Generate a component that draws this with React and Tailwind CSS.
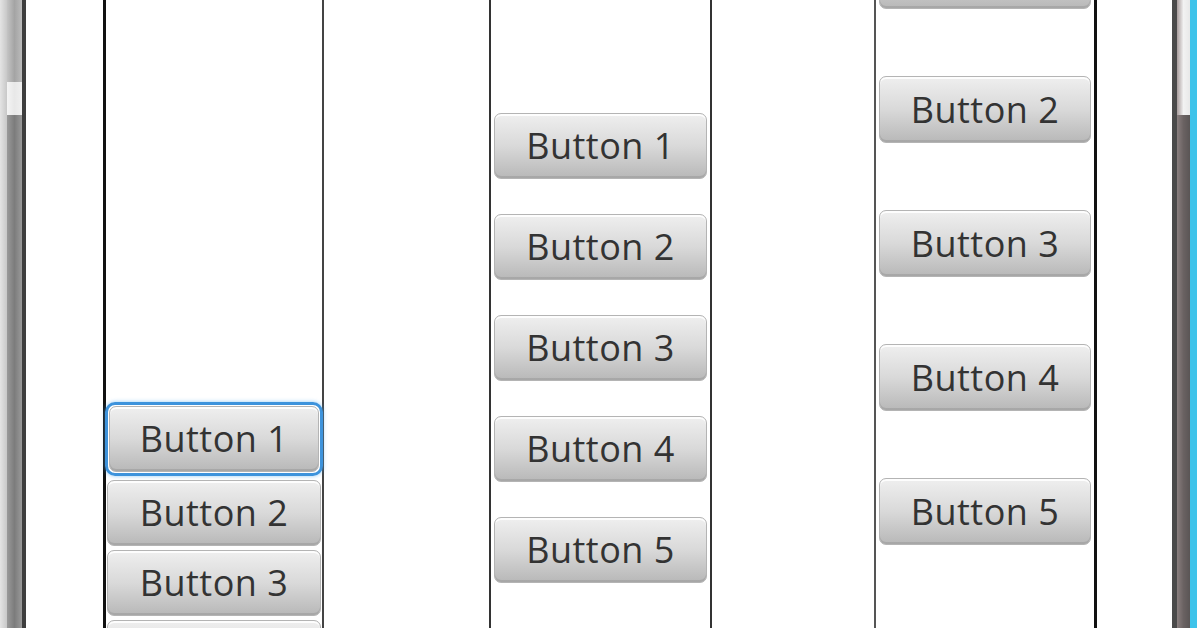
import React from "react";

const font = { fontFamily: '"Open Sans", "Noto Sans", sans-serif' };

function Btn({ label, h = "h-[66px]", focused = false }) {
  const inner = (
    <div
      className={`${h} w-full flex items-center justify-center rounded-[7px] border border-[#b4b4b4] bg-gradient-to-b from-[#efefef] via-[#d9d9d9] to-[#b8b8b8] shadow-[inset_0_2px_0_rgba(255,255,255,0.85),inset_0_-2px_0_rgba(150,150,150,0.5)] text-[36px] text-[#333333] tracking-[0.5px]`}
      style={font}
    >
      {label}
    </div>
  );
  if (focused) {
    return (
      <div className="rounded-[10px] border-[3px] border-[#3d93dc] p-px -mx-[2px] shadow-[0_0_4px_rgba(80,170,240,0.6)]">
        {inner}
      </div>
    );
  }
  return inner;
}

export default function App() {
  return (
    <div className="w-[1197px] h-[628px] overflow-hidden bg-white flex">
      {/* left window frame */}
      <div className="w-[26px] h-full flex shrink-0">
        <div className="w-[7px] h-full bg-gradient-to-r from-[#e4e4e4] to-[#c8c8c8]" />
        <div className="w-[15px] h-full flex flex-col">
          <div className="h-[82px] bg-gradient-to-r from-[#c4c4c4] via-[#a4a4a4] to-[#bcbcbc]" />
          <div className="h-[33px] bg-gradient-to-r from-[#f4f4f4] via-[#e8e8e8] to-[#f0f0f0]" />
          <div className="flex-1 bg-gradient-to-r from-[#9a9a9a] via-[#7c7c7c] to-[#9a9a9a]" />
        </div>
        <div className="w-[4px] h-full bg-[#3e3e3e]" />
      </div>

      {/* content */}
      <div className="flex-1 h-full flex pl-[77px]">
        {/* column 1 */}
        <div className="w-[221px] h-full border-l-[3px] border-l-[#111] border-r-2 border-r-[#444] flex flex-col justify-end shrink-0 overflow-visible">
          <div className="flex flex-col gap-[4px] px-[1px] mb-[-58px]">
            <Btn label="Button 1" focused />
            <Btn label="Button 2" />
            <Btn label="Button 3" />
            <Btn label="Button 4" />
          </div>
        </div>

        <div className="w-[165px] shrink-0" />

        {/* column 2 */}
        <div className="w-[223px] h-full border-x-[2px] border-[#333] shrink-0 flex flex-col pt-[113px] px-[3px] gap-[35px]">
          <Btn label="Button 1" />
          <Btn label="Button 2" />
          <Btn label="Button 3" />
          <Btn label="Button 4" />
          <Btn label="Button 5" />
        </div>

        <div className="w-[162px] shrink-0" />

        {/* column 3 */}
        <div className="w-[223px] h-full border-l-2 border-l-[#555] border-r-[3px] border-r-[#111] shrink-0 flex flex-col px-[3px] gap-[67px] overflow-hidden">
          <div className="-mt-[58px]">
            <Btn label="Button 1" h="h-[67px]" />
          </div>
          <Btn label="Button 2" h="h-[67px]" />
          <Btn label="Button 3" h="h-[67px]" />
          <Btn label="Button 4" h="h-[67px]" />
          <Btn label="Button 5" h="h-[67px]" />
        </div>

        <div className="flex-1" />
      </div>

      {/* right window frame */}
      <div className="w-[25px] h-full flex shrink-0">
        <div className="w-[5px] h-full bg-[#4a4a4a]" />
        <div className="w-[13px] h-full flex flex-col">
          <div className="h-[115px] bg-gradient-to-r from-[#a89c9c] via-[#f2f2f2] to-[#e8e8e8]" />
          <div className="flex-1 bg-gradient-to-r from-[#8a7f7f] via-[#6a6262] to-[#5a5555]" />
        </div>
        <div className="w-[7px] h-full bg-[#3ec3ea]" />
      </div>
    </div>
  );
}
